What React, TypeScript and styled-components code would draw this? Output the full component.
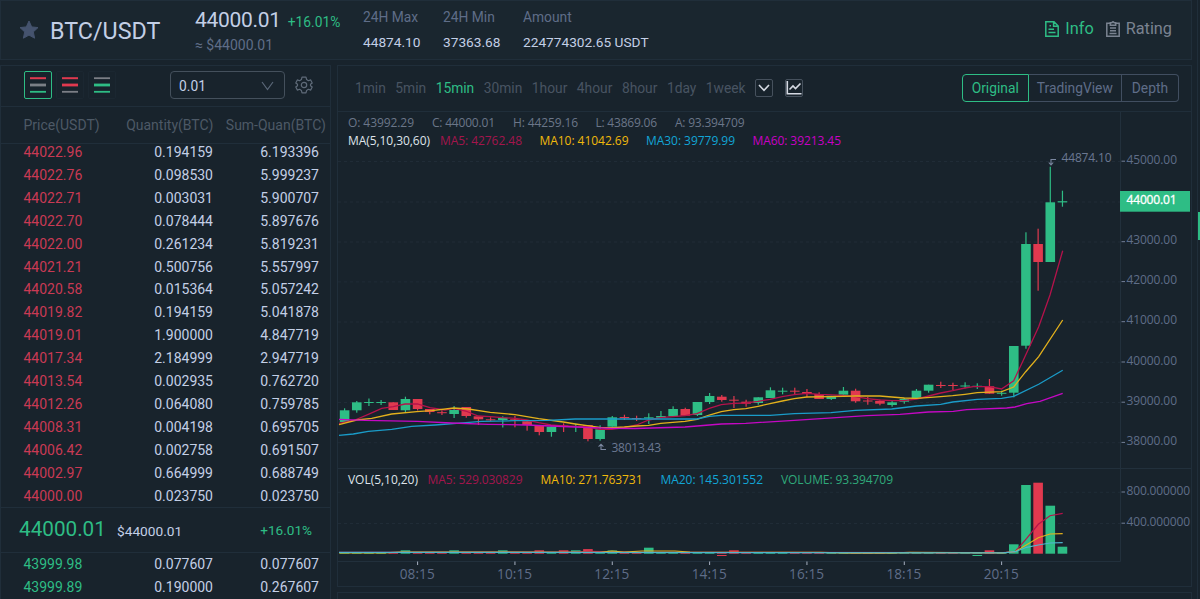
import React, { useState } from "react";
import styled, { createGlobalStyle } from "styled-components";

type Side = "up" | "down";

interface Order {
  price: string;
  quantity: string;
  sum: string;
}

interface ChartText {
  x: number;
  width: number;
  color: string;
  text: string;
}

const GREEN = "#2ebd85";
const RED = "#e0394f";
const BORDER = "#202e3a";
const MUTED = "#5f6d88";

const asks: Order[] = [
  { price: "44022.96", quantity: "0.194159", sum: "6.193396" },
  { price: "44022.76", quantity: "0.098530", sum: "5.999237" },
  { price: "44022.71", quantity: "0.003031", sum: "5.900707" },
  { price: "44022.70", quantity: "0.078444", sum: "5.897676" },
  { price: "44022.00", quantity: "0.261234", sum: "5.819231" },
  { price: "44021.21", quantity: "0.500756", sum: "5.557997" },
  { price: "44020.58", quantity: "0.015364", sum: "5.057242" },
  { price: "44019.82", quantity: "0.194159", sum: "5.041878" },
  { price: "44019.01", quantity: "1.900000", sum: "4.847719" },
  { price: "44017.34", quantity: "2.184999", sum: "2.947719" },
  { price: "44013.54", quantity: "0.002935", sum: "0.762720" },
  { price: "44012.26", quantity: "0.064080", sum: "0.759785" },
  { price: "44008.31", quantity: "0.004198", sum: "0.695705" },
  { price: "44006.42", quantity: "0.002758", sum: "0.691507" },
  { price: "44002.97", quantity: "0.664999", sum: "0.688749" },
  { price: "44000.00", quantity: "0.023750", sum: "0.023750" },
];

const bids: Order[] = [
  { price: "43999.98", quantity: "0.077607", sum: "0.077607" },
  { price: "43999.89", quantity: "0.190000", sum: "0.267607" },
];

const stats = [
  { label: "24H Max", value: "44874.10" },
  { label: "24H Min", value: "37363.68" },
  { label: "Amount", value: "224774302.65 USDT" },
];

const intervals = ["1min", "5min", "15min", "30min", "1hour", "4hour", "8hour", "1day", "1week"];
const views = ["Original", "TradingView", "Depth"];

const ohlc: ChartText[] = [
  { x: 348, width: 66, color: "#6b7689", text: "O: 43992.29" },
  { x: 432, width: 63, color: "#6b7689", text: "C: 44000.01" },
  { x: 513, width: 65, color: "#6b7689", text: "H: 44259.16" },
  { x: 595.5, width: 61.5, color: "#6b7689", text: "L: 43869.06" },
  { x: 675, width: 69.5, color: "#6b7689", text: "A: 93.394709" },
];

const priceAverages: ChartText[] = [
  { x: 348, width: 82, color: "#dfe3ea", text: "MA(5,10,30,60)" },
  { x: 440, width: 82, color: "#a3154c", text: "MA5: 42762.48" },
  { x: 539.5, width: 89, color: "#f0b90b", text: "MA10: 41042.69" },
  { x: 646, width: 89, color: "#12a5d6", text: "MA30: 39779.99" },
  { x: 752.5, width: 88.5, color: "#c800c4", text: "MA60: 39213.45" },
];

const volumeAverages: ChartText[] = [
  { x: 348, width: 70, color: "#dfe3ea", text: "VOL(5,10,20)" },
  { x: 427.5, width: 95, color: "#a3154c", text: "MA5: 529.030829" },
  { x: 540.5, width: 102, color: "#f0b90b", text: "MA10: 271.763731" },
  { x: 660.5, width: 102.5, color: "#12a5d6", text: "MA20: 145.301552" },
  { x: 781, width: 112, color: "#2fa97a", text: "VOLUME: 93.394709" },
];

// side, high, body top, body bottom, low
const candles: [Side, number, number, number, number][] = [
  ["up", 408.3, 410.3, 422, 422],
  ["up", 401, 402.3, 410.3, 412.7],
  ["up", 398.5, 402, 403, 406],
  ["up", 400, 402, 403, 405],
  ["down", 402.3, 402.3, 410, 410],
  ["up", 396.7, 399, 410.3, 413],
  ["down", 399, 399, 409, 410.5],
  ["down", 409, 409, 412, 414.3],
  ["down", 410.3, 412.2, 413.2, 415],
  ["up", 406, 410, 414, 418],
  ["down", 407, 407, 416, 417.7],
  ["down", 416.3, 416.3, 419.3, 425],
  ["down", 417.3, 419.3, 420.3, 421.3],
  ["up", 416.3, 417.7, 420, 427.5],
  ["down", 416, 419.3, 420.3, 427.3],
  ["down", 421.3, 421.3, 425, 430.7],
  ["down", 425.3, 425.3, 432, 435.3],
  ["up", 426.7, 426.7, 432, 436.7],
  ["down", 423.3, 425.5, 426.5, 432],
  ["up", 423.3, 426, 427, 432],
  ["down", 425, 425, 439, 441.3],
  ["up", 425.3, 429.3, 439, 440.7],
  ["up", 416, 417.3, 426.7, 426.7],
  ["down", 414.7, 417, 418, 420],
  ["down", 415.7, 418, 419, 421],
  ["up", 413.3, 417.3, 418.3, 424],
  ["up", 411, 416, 417.7, 417.7],
  ["up", 406.3, 409, 416.3, 416.3],
  ["down", 407.7, 409, 415.7, 415.7],
  ["up", 402, 402, 415, 416],
  ["up", 393, 396, 402, 404],
  ["down", 395, 396.7, 400, 401.7],
  ["down", 396, 399.7, 400.7, 408],
  ["down", 399.7, 401.7, 403.7, 406.7],
  ["up", 397.3, 397.3, 403, 404.7],
  ["up", 387.3, 390.3, 398, 398],
  ["up", 387.7, 390.7, 391.7, 394.3],
  ["down", 387.7, 390.7, 391.7, 395],
  ["down", 389, 392, 394, 397.3],
  ["down", 392.3, 394, 399, 399],
  ["up", 395.7, 395.7, 399, 400],
  ["up", 387, 390.7, 394.7, 394.7],
  ["down", 388.7, 390.7, 401.3, 402.7],
  ["down", 397, 400.5, 401.5, 404.7],
  ["down", 399.7, 401, 403.7, 405.3],
  ["up", 400.3, 402.3, 405, 406.7],
  ["up", 397.7, 399, 401.7, 403.7],
  ["up", 389, 390.7, 398.7, 398.7],
  ["up", 384.7, 384.7, 390.7, 392.7],
  ["down", 381.7, 385, 386, 388],
  ["down", 382.7, 385, 386, 390],
  ["up", 382.3, 385.5, 386.5, 388.3],
  ["up", 383.3, 385.8, 386.8, 389],
  ["down", 379, 386.3, 393.7, 393.7],
  ["up", 390.7, 392.8, 393.8, 395.7],
  ["up", 346, 346, 392.7, 397.3],
  ["up", 232.3, 244, 345.7, 348.7],
  ["down", 228.7, 244, 262, 290.7],
  ["up", 166.7, 202.3, 262, 262],
  ["up", 190.7, 201.2, 202.4, 206.7],
];

const VOLUME_BASE = 553.7;

// bars taller than the one pixel floor
const volumeHeights: Record<number, number> = {
  5: 3.4, 9: 3.4, 13: 3.4, 16: 3.4, 18: 3.4, 19: 3.4, 20: 4.6, 22: 3.2, 25: 6,
  32: 3.4, 53: 3.4, 55: 9.4, 56: 68.7, 57: 71, 58: 48, 59: 7,
};

const priceLines = [
  {
    color: "#b5124b",
    points:
      "339,423.3 355,420 368.3,414.3 381.7,408.3 393.3,406.7 405,404 417.3,404 430,407.7 445,410 453.7,408.3 465.7,411 478.3,416 490.3,416.7 502.3,417.7 515,418.3 526.7,420 538.7,422.7 551,425 563.3,426 575.3,426.3 587.3,426.7 599.7,429.3 612,429.3 624.3,427.7 636.7,425 648.7,420 660.7,417.7 672.7,416.7 685,415.7 697,413.7 709.3,408.3 721.3,404.7 733.7,403.3 745.7,403 758,401.3 770,399.3 782.3,396.7 794.3,394.7 806.7,393.3 820,394.3 843,395.3 855.3,396.7 867.3,398.7 879.7,400 891.7,400.7 904,400.7 916.7,399 928.7,396 940.7,393 952.7,390.7 965,388 973.3,386.7 989.3,386.7 1001.5,389 1013.7,380.7 1022,363 1038.7,326.7 1050,295 1062.7,250.7",
  },
  {
    color: "#e3b11c",
    points:
      "339,424.7 356.7,420 371.7,418.3 391.7,414 416.7,411.7 431.7,410.7 453.7,408 468.3,409 490.3,412.3 515,414.7 538.7,418.7 563.3,422 575.3,424 587.3,425.7 599.7,427.3 612,427.7 624.3,427 636.7,426 648.7,425.3 660.7,423.3 685,421.3 697,419.3 709.3,415 721.3,411.7 733.7,409.7 745.7,408.7 758,406.3 770,403.7 782.3,401 794.3,398.7 806.7,397 831,396.7 855.3,396 879.7,396 891.7,397 904,398 916.7,398.3 940.7,396.7 952.7,395.7 965,394.3 977.3,392.7 1001.7,391.7 1013.7,387 1025.7,371.7 1038.7,356.7 1062.7,320",
  },
  {
    color: "#1a9cc9",
    points:
      "339,435.3 353.3,434 368.3,431.3 391.7,429.3 411.7,426.3 435,425 465.7,422.7 481.7,421.3 515,420.7 548.3,420.3 575,419 696.7,419 709.3,416.3 721.3,415.3 770,415.3 794.3,413.7 831,412.7 855.3,410.3 891.7,409 916.7,406 940.7,404.3 952.7,402 977.3,399.3 1001.7,398.3 1013.7,396.3 1038.7,384.3 1062.7,370.3",
  },
  {
    color: "#c508c4",
    points:
      "339,419.3 365,420.3 417.3,421.3 451.7,423 488.3,424.3 526.7,425 575.3,427 612,428.3 635,428.5 685,427 721.3,424 745.7,423.3 794.3,420.3 866.7,415.7 900,414.3 928.3,412 953.3,411.3 966.7,409.7 1006.7,408 1015,407 1026.7,403.7 1040,401.3 1062.7,393.3",
  },
];

const volumeLines = [
  { color: "#b5124b", points: "339,552.3 575,552 590,551.3 640,552.3 1003,552.6 1015,551.7 1026.7,538.3 1038.3,524.3 1050,515.7 1062.7,513.3" },
  { color: "#e3b11c", points: "339,552.9 385,552.9 400,552 600,552.3 612,551 624,552.2 642,551 675,551 690,552.2 820,552.3 850,553.2 890,553.2 910,552.3 1003,552.8 1015,551.7 1038.3,537.7 1050,534 1062.7,533.7" },
  { color: "#4fb6cf", points: "339,552.3 1003,552.8 1015,551.7 1026.7,547.3 1038.3,545 1050,543 1062.7,542.7" },
];

const priceTicks = [
  { y: 161.5, label: "45000.00" },
  { y: 202, label: "" },
  { y: 242, label: "43000.00" },
  { y: 281.9, label: "42000.00" },
  { y: 322, label: "41000.00" },
  { y: 362.3, label: "40000.00" },
  { y: 402.5, label: "39000.00" },
  { y: 442.7, label: "38000.00" },
  { y: 492.3, label: "800.000000" },
  { y: 523.5, label: "400.000000" },
];

const timeTicks = ["08:15", "10:15", "12:15", "14:15", "16:15", "18:15", "20:15"];

const candleX = (i: number) => 344.6 + i * 12.167;

const Label = ({ item, y }: { item: ChartText; y: number }) => (
  <text x={item.x} y={y} fill={item.color} textLength={item.width} fontSize={12}>
    {item.text}
  </text>
);

const KlineChart = () => (
  <ChartSvg viewBox="338 112 853 474">
    {priceTicks.map((t) => (
      <g key={t.y}>
        <line x1={338} x2={1120} y1={t.y} y2={t.y} stroke="#202c37" strokeDasharray="3 3" />
        {t.label && (
          <>
            <line x1={1121.5} x2={1125} y1={t.y - 0.3} y2={t.y - 0.3} stroke="#75829a" />
            <text x={1126.5} y={t.y + 2.3} fill={MUTED} fontSize={12} textLength={t.label.length > 8 ? 63.5 : 50.5}>
              {t.label}
            </text>
          </>
        )}
      </g>
    ))}
    <path d="M1120.5 112V561.5M338 468.5H1191M338 561.5H1120.5" stroke="#22303c" fill="none" />

    {candles.map(([side, high, top, bottom, low], i) => {
      const color = side === "up" ? GREEN : RED;
      const x = candleX(i);
      return (
        <g key={i} fill={color}>
          <rect x={x - 0.6} y={high} width={1.2} height={low - high} />
          <rect x={x - 4.8} y={top} width={9.6} height={bottom - top} />
        </g>
      );
    })}
    {priceLines.map((l) => (
      <polyline key={l.color} points={l.points} stroke={l.color} strokeWidth={1.3} fill="none" />
    ))}

    {candles.map(([side], i) => {
      const height = volumeHeights[i] ?? 1.4;
      return (
        <rect
          key={i}
          x={candleX(i) - 4.8}
          y={VOLUME_BASE - height}
          width={9.6}
          height={height}
          fill={side === "up" ? GREEN : RED}
        />
      );
    })}
    <rect x={candleX(31) - 4.8} y={555} width={9.6} height={1} fill={RED} />
    <rect x={candleX(52) - 4.8} y={555} width={9.6} height={1} fill={GREEN} />
    {volumeLines.map((l) => (
      <polyline key={l.color} points={l.points} stroke={l.color} strokeWidth={1.2} fill="none" />
    ))}

    {ohlc.map((item) => <Label key={item.text} item={item} y={127.3} />)}
    {priceAverages.map((item) => <Label key={item.text} item={item} y={145.4} />)}
    {volumeAverages.map((item) => <Label key={item.text} item={item} y={484.3} />)}

    <g stroke="#7b88a1" fill="none" strokeWidth={1.1}>
      <path d="M1056 159.5H1051V164.5M1048.8 162.5L1051 165L1053.2 162.5" />
      <path d="M606 449.5H601V444.5M598.6 446.7L601 444.2L603.4 446.7" />
    </g>
    <text x={1061.5} y={162} fill="#6b7892" fontSize={12} textLength={50}>44874.10</text>
    <text x={611.5} y={452.3} fill="#6b7892" fontSize={12} textLength={49.5}>38013.43</text>

    {timeTicks.map((t, i) => {
      const x = candleX(6 + i * 8);
      return (
        <g key={t}>
          <line x1={x} x2={x} y1={561.5} y2={565} stroke="#a7b0c0" />
          <text x={x - 17.9} y={579.3} fill={MUTED} fontSize={13.6} textLength={35}>{t}</text>
        </g>
      );
    })}

    <rect x={1120} y={191} width={70} height={20.7} fill={GREEN} />
    <text x={1126.5} y={204.4} fill="#fff" stroke="#fff" strokeWidth={0.3} fontSize={12} textLength={50}>44000.01</text>
  </ChartSvg>
);

const OrderList = ({ orders, side }: { orders: Order[]; side: Side }) => (
  <>
    {orders.map((o) => (
      <OrderRow key={o.price}>
        <Price $side={side}>{o.price}</Price>
        <Cell>{o.quantity}</Cell>
        <Cell>{o.sum}</Cell>
      </OrderRow>
    ))}
  </>
);

const App: React.FC = () => {
  const [interval, setActiveInterval] = useState("15min");
  const [view, setView] = useState("Original");
  const [depthMode, setDepthMode] = useState(0);

  const depthIcons = [
    [RED, "#7b7f86", GREEN],
    [RED, RED, "#7b7f86"],
    ["#7b7f86", GREEN, GREEN],
  ];

  return (
    <Page>
      <GlobalStyle />
      <Main>
        <Header>
          <Star viewBox="0 0 20 20">
            <path
              d="M10 1l2.7 5.9 6.3.7-4.7 4.3 1.3 6.3L10 15.1l-5.6 3.1 1.3-6.3L1 7.6l6.3-.7z"
              fill="#45536e"
              stroke="#45536e"
              strokeLinejoin="round"
            />
          </Star>
          <Pair>BTC/USDT</Pair>
          <LastPrice>
            <PriceLine>
              <BigPrice>44000.01</BigPrice>
              <Change>+16.01%</Change>
            </PriceLine>
            <Fiat>≈ $44000.01</Fiat>
          </LastPrice>
          {stats.map((s) => (
            <Stat key={s.label}>
              <StatLabel>{s.label}</StatLabel>
              <StatValue>{s.value}</StatValue>
            </Stat>
          ))}
          <HeaderLinks>
            <HeaderLink $active>
              <LinkIcon viewBox="0 0 14 16">
                <path d="M.8.8H9L13.2 5V15.2H.8zM8.6 1V5.3H13M4.5 4.8H6M3.5 8.3H9M3.5 11.5H10.5" />
              </LinkIcon>
              Info
            </HeaderLink>
            <HeaderLink>
              <LinkIcon viewBox="0 0 14 16">
                <path d="M4 2.2H.8V15.2H13.2V2.2H10M4.3 1.7H5.8L7 .7L8.2 1.7H9.7V4.2H4.3zM4 7H10M4 9.7H10M3.5 12.4H10.5" />
              </LinkIcon>
              Rating
            </HeaderLink>
          </HeaderLinks>
        </Header>

        <Columns>
          <OrderBook>
            <BookToolbar>
              {depthIcons.map(([a, b, c], i) => (
                <DepthButton key={i} $active={depthMode === i} onClick={() => setDepthMode(i)}>
                  <svg width="18" height="18" viewBox="0 0 18 18" fill="none">
                    <path d="M1 2.2H17" stroke={a} strokeWidth={i === 2 ? 1.8 : 2} />
                    <path d="M1 9H17" stroke={b} strokeWidth={2.8} />
                    <path d="M1 15.8H17" stroke={c} strokeWidth={1.8} />
                  </svg>
                </DepthButton>
              ))}
              <Precision>
                0.01
                <svg width="13" height="10" viewBox="0 0 13 10" fill="none" stroke="#5a6778" strokeWidth="1.2">
                  <path d="M1 1L6.5 8.5L12 1" />
                </svg>
              </Precision>
              <Gear viewBox="0 0 18 18">
                <path d="M7 1.2H11L11.6 3.6L13.4 4.7L15.7 3.9L17.2 6.9L15.5 8.2V9.8L17.2 11.1L15.7 14.1L13.4 13.3L11.6 14.4L11 16.8H7L6.4 14.4L4.6 13.3L2.3 14.1L.8 11.1L2.5 9.8V8.2L.8 6.9L2.3 3.9L4.6 4.7L6.4 3.6z" />
                <circle cx="9" cy="9" r="2.7" />
              </Gear>
            </BookToolbar>
            <BookHead>
              <HeadCell>Price(USDT)</HeadCell>
              <HeadCell>Quantity(BTC)</HeadCell>
              <HeadCell>Sum-Quan(BTC)</HeadCell>
            </BookHead>
            <AskList>
              <OrderList orders={asks} side="down" />
            </AskList>
            <Ticker>
              <TickerPrice>44000.01</TickerPrice>
              <TickerFiat>$44000.01</TickerFiat>
              <TickerChange>+16.01%</TickerChange>
            </Ticker>
            <OrderList orders={bids} side="up" />
          </OrderBook>

          <ChartColumn>
            <ChartPanel>
              <ChartToolbar>
                {intervals.map((name) => (
                  <Interval key={name} $active={name === interval} onClick={() => setActiveInterval(name)}>
                    {name}
                  </Interval>
                ))}
                <ToolButton>
                  <svg width="12" height="8" viewBox="0 0 12 8" fill="none" stroke="#d5dae3" strokeWidth="1.6">
                    <path d="M1 1L6 6.3L11 1" />
                  </svg>
                </ToolButton>
                <ToolButton>
                  <svg width="16" height="14" viewBox="0 0 16 14" fill="none" stroke="#d5dae3" strokeWidth="1.6">
                    <path d="M1.3 0V12.7H15.5M3.5 8.5L7 5L9.5 7.5L14.5 2.5" />
                  </svg>
                </ToolButton>
                <ViewSwitch>
                  {views.map((name) => (
                    <ViewButton key={name} $active={name === view} onClick={() => setView(name)}>
                      {name}
                    </ViewButton>
                  ))}
                </ViewSwitch>
              </ChartToolbar>
              <KlineChart />
            </ChartPanel>
            <NextPanel />
          </ChartColumn>
        </Columns>
      </Main>
      <SidePanel>
        <SideMark />
      </SidePanel>
    </Page>
  );
};

export default App;

const GlobalStyle = createGlobalStyle`
  body {
    margin: 0;
    overflow: hidden;
    background: #18232c;
  }
  * {
    box-sizing: border-box;
  }
  button {
    font-family: inherit;
    cursor: pointer;
  }
`;

const Page = styled.div`
  display: flex;
  gap: 5px;
  width: 1200px;
  height: 599px;
  overflow: hidden;
  background: #18232c;
  color: #c3cfe6;
  font-family: Roboto, "Liberation Sans", sans-serif;
  font-size: 14px;
  white-space: nowrap;
`;

const Main = styled.div`
  display: flex;
  flex-direction: column;
  gap: 5px;
  width: 1192px;
  flex-shrink: 0;
`;

const Header = styled.header`
  display: flex;
  align-items: center;
  height: 60px;
  flex-shrink: 0;
  padding: 0 19px 0 18px;
  background: #1a262f;
  border: 1px solid ${BORDER};
`;

const Star = styled.svg`
  width: 20px;
  height: 20px;
  margin-right: 11px;
`;

const Pair = styled.h1`
  width: 145px;
  margin: 0;
  padding-top: 1px;
  font-size: 23.3px;
  font-weight: 400;
  line-height: 28px;
`;

const LastPrice = styled.div`
  width: 168px;
  padding-top: 2px;
`;

const PriceLine = styled.div`
  display: flex;
  align-items: baseline;
  gap: 7px;
  height: 26px;
  line-height: 26px;
`;

const BigPrice = styled.span`
  font-size: 21px;
  letter-spacing: -0.3px;
`;

const Change = styled.span`
  color: ${GREEN};
  font-size: 13.8px;
`;

const Fiat = styled.div`
  height: 23px;
  line-height: 25px;
  font-size: 14px;
  color: ${MUTED};
`;

const Stat = styled.div`
  min-width: 80px;
`;

const StatLabel = styled.div`
  height: 25px;
  line-height: 25px;
  font-size: 13.8px;
  color: ${MUTED};
`;

const StatValue = styled.div`
  height: 25px;
  line-height: 25px;
  font-size: 13.7px;
`;

const HeaderLinks = styled.div`
  display: flex;
  gap: 12px;
  margin-left: auto;
  padding-bottom: 3px;
`;

const HeaderLink = styled.a<{ $active?: boolean }>`
  display: flex;
  align-items: center;
  gap: 6px;
  font-size: 16.3px;
  color: ${(props) => (props.$active ? GREEN : "#7a8391")};
`;

const LinkIcon = styled.svg`
  width: 14px;
  height: 16px;
  fill: none;
  stroke: currentColor;
  stroke-width: 1.5;
`;

const Columns = styled.div`
  display: flex;
  gap: 6px;
  flex: 1;
  min-height: 0;
`;

const OrderBook = styled.section`
  display: flex;
  flex-direction: column;
  width: 331px;
  border: 1px solid ${BORDER};
  border-bottom: none;
  overflow: hidden;
`;

const BookToolbar = styled.div`
  display: flex;
  align-items: center;
  height: 41px;
  flex-shrink: 0;
  padding: 0 17px 2px 22.5px;
  border-bottom: 1px solid ${BORDER};
`;

const DepthButton = styled.button<{ $active: boolean }>`
  display: flex;
  align-items: center;
  justify-content: center;
  width: 28px;
  height: 28px;
  margin-right: 4px;
  padding: 0;
  background: none;
  border: 1px solid ${(props) => (props.$active ? GREEN : "#1b2731")};
  border-radius: 2px;
`;

const Precision = styled.div`
  display: flex;
  align-items: center;
  justify-content: space-between;
  width: 115px;
  height: 28px;
  margin-left: auto;
  padding: 1px 10px 0 8px;
  border: 1px solid #44505c;
  border-radius: 4px;
  font-size: 13.8px;
`;

const Gear = styled.svg`
  width: 18px;
  height: 18px;
  margin-left: 10px;
  fill: none;
  stroke: #5f6b79;
  stroke-width: 1.2;
  stroke-linejoin: round;
`;

const BookHead = styled.div`
  display: flex;
  justify-content: space-between;
  align-items: center;
  height: 37px;
  flex-shrink: 0;
  padding: 0 4px 0 22.5px;
  border-bottom: 1px solid ${BORDER};
`;

const HeadCell = styled.span`
  font-size: 14px;
  color: #4d5966;

  &:nth-child(2) {
    margin-left: 14px;
  }
`;

const AskList = styled.div`
  display: flex;
  flex-direction: column;
  justify-content: flex-end;
  height: 363.4px;
  flex-shrink: 0;
  overflow: hidden;
`;

const OrderRow = styled.div`
  display: grid;
  grid-template-columns: 90px 99.5px 106px;
  height: 22.9px;
  flex-shrink: 0;
  padding-left: 22.5px;
  line-height: 23px;
  font-size: 14px;
`;

const Price = styled.span<{ $side: Side }>`
  color: ${(props) => (props.$side === "up" ? GREEN : "#c93a54")};
`;

const Cell = styled.span`
  text-align: right;
`;

const Ticker = styled.div`
  display: flex;
  align-items: center;
  height: 45.6px;
  flex-shrink: 0;
  padding: 0 18px 2px;
  border-top: 1px solid ${BORDER};
  border-bottom: 1px solid ${BORDER};
`;

const TickerPrice = styled.span`
  width: 98px;
  color: ${GREEN};
  font-size: 20.7px;
`;

const TickerFiat = styled.span`
  padding-top: 3px;
  font-size: 13.7px;
`;

const TickerChange = styled.span`
  margin-left: auto;
  padding-top: 1px;
  color: ${GREEN};
  font-size: 13.6px;
`;

const ChartColumn = styled.div`
  display: flex;
  flex-direction: column;
  gap: 5px;
  flex: 1;
  min-width: 0;
`;

const ChartPanel = styled.section`
  height: 522px;
  flex-shrink: 0;
  border: 1px solid ${BORDER};
`;

const ChartToolbar = styled.div`
  display: flex;
  align-items: center;
  height: 46px;
  padding: 0 12px 2px 17px;
  border-bottom: 1px solid ${BORDER};
`;

const Interval = styled.button<{ $active: boolean }>`
  margin-right: 9.5px;
  padding: 1px 0 0;
  background: none;
  border: none;
  font-size: 13.8px;
  color: ${(props) => (props.$active ? GREEN : "#485462")};
`;

const ToolButton = styled.button`
  display: flex;
  align-items: center;
  justify-content: center;
  width: 18px;
  height: 18px;
  margin-right: 12px;
  padding: 0;
  background: none;
  border: 1px solid #46515d;
  border-radius: 2px;
`;

const ViewSwitch = styled.div`
  display: flex;
  margin-left: auto;
`;

const ViewButton = styled.button<{ $active: boolean }>`
  height: 28px;
  padding: 0 9px;
  background: none;
  border: 1px solid ${(props) => (props.$active ? GREEN : "#414e60")};
  color: ${(props) => (props.$active ? GREEN : MUTED)};
  font-size: 13.8px;

  & + & {
    border-left-width: ${(props) => (props.$active ? "1px" : "0")};
  }
  &:first-child {
    border-radius: 4px 0 0 4px;
  }
  &:nth-child(2) {
    padding: 0 8px;
  }
  &:last-child {
    padding: 0 10px;
    border-radius: 0 4px 4px 0;
  }
`;

const ChartSvg = styled.svg`
  display: block;
  width: 853px;
  height: 474px;
  font-family: "Open Sans", "Noto Sans", sans-serif;
`;

const NextPanel = styled.div`
  flex: 1;
  border: 1px solid ${BORDER};
  border-bottom: none;
`;

const SidePanel = styled.aside`
  width: 3px;
  flex-shrink: 0;
  border-left: 1px solid ${BORDER};
`;

const SideMark = styled.div`
  height: 28px;
  margin-top: 212px;
  background: ${GREEN};
`;
